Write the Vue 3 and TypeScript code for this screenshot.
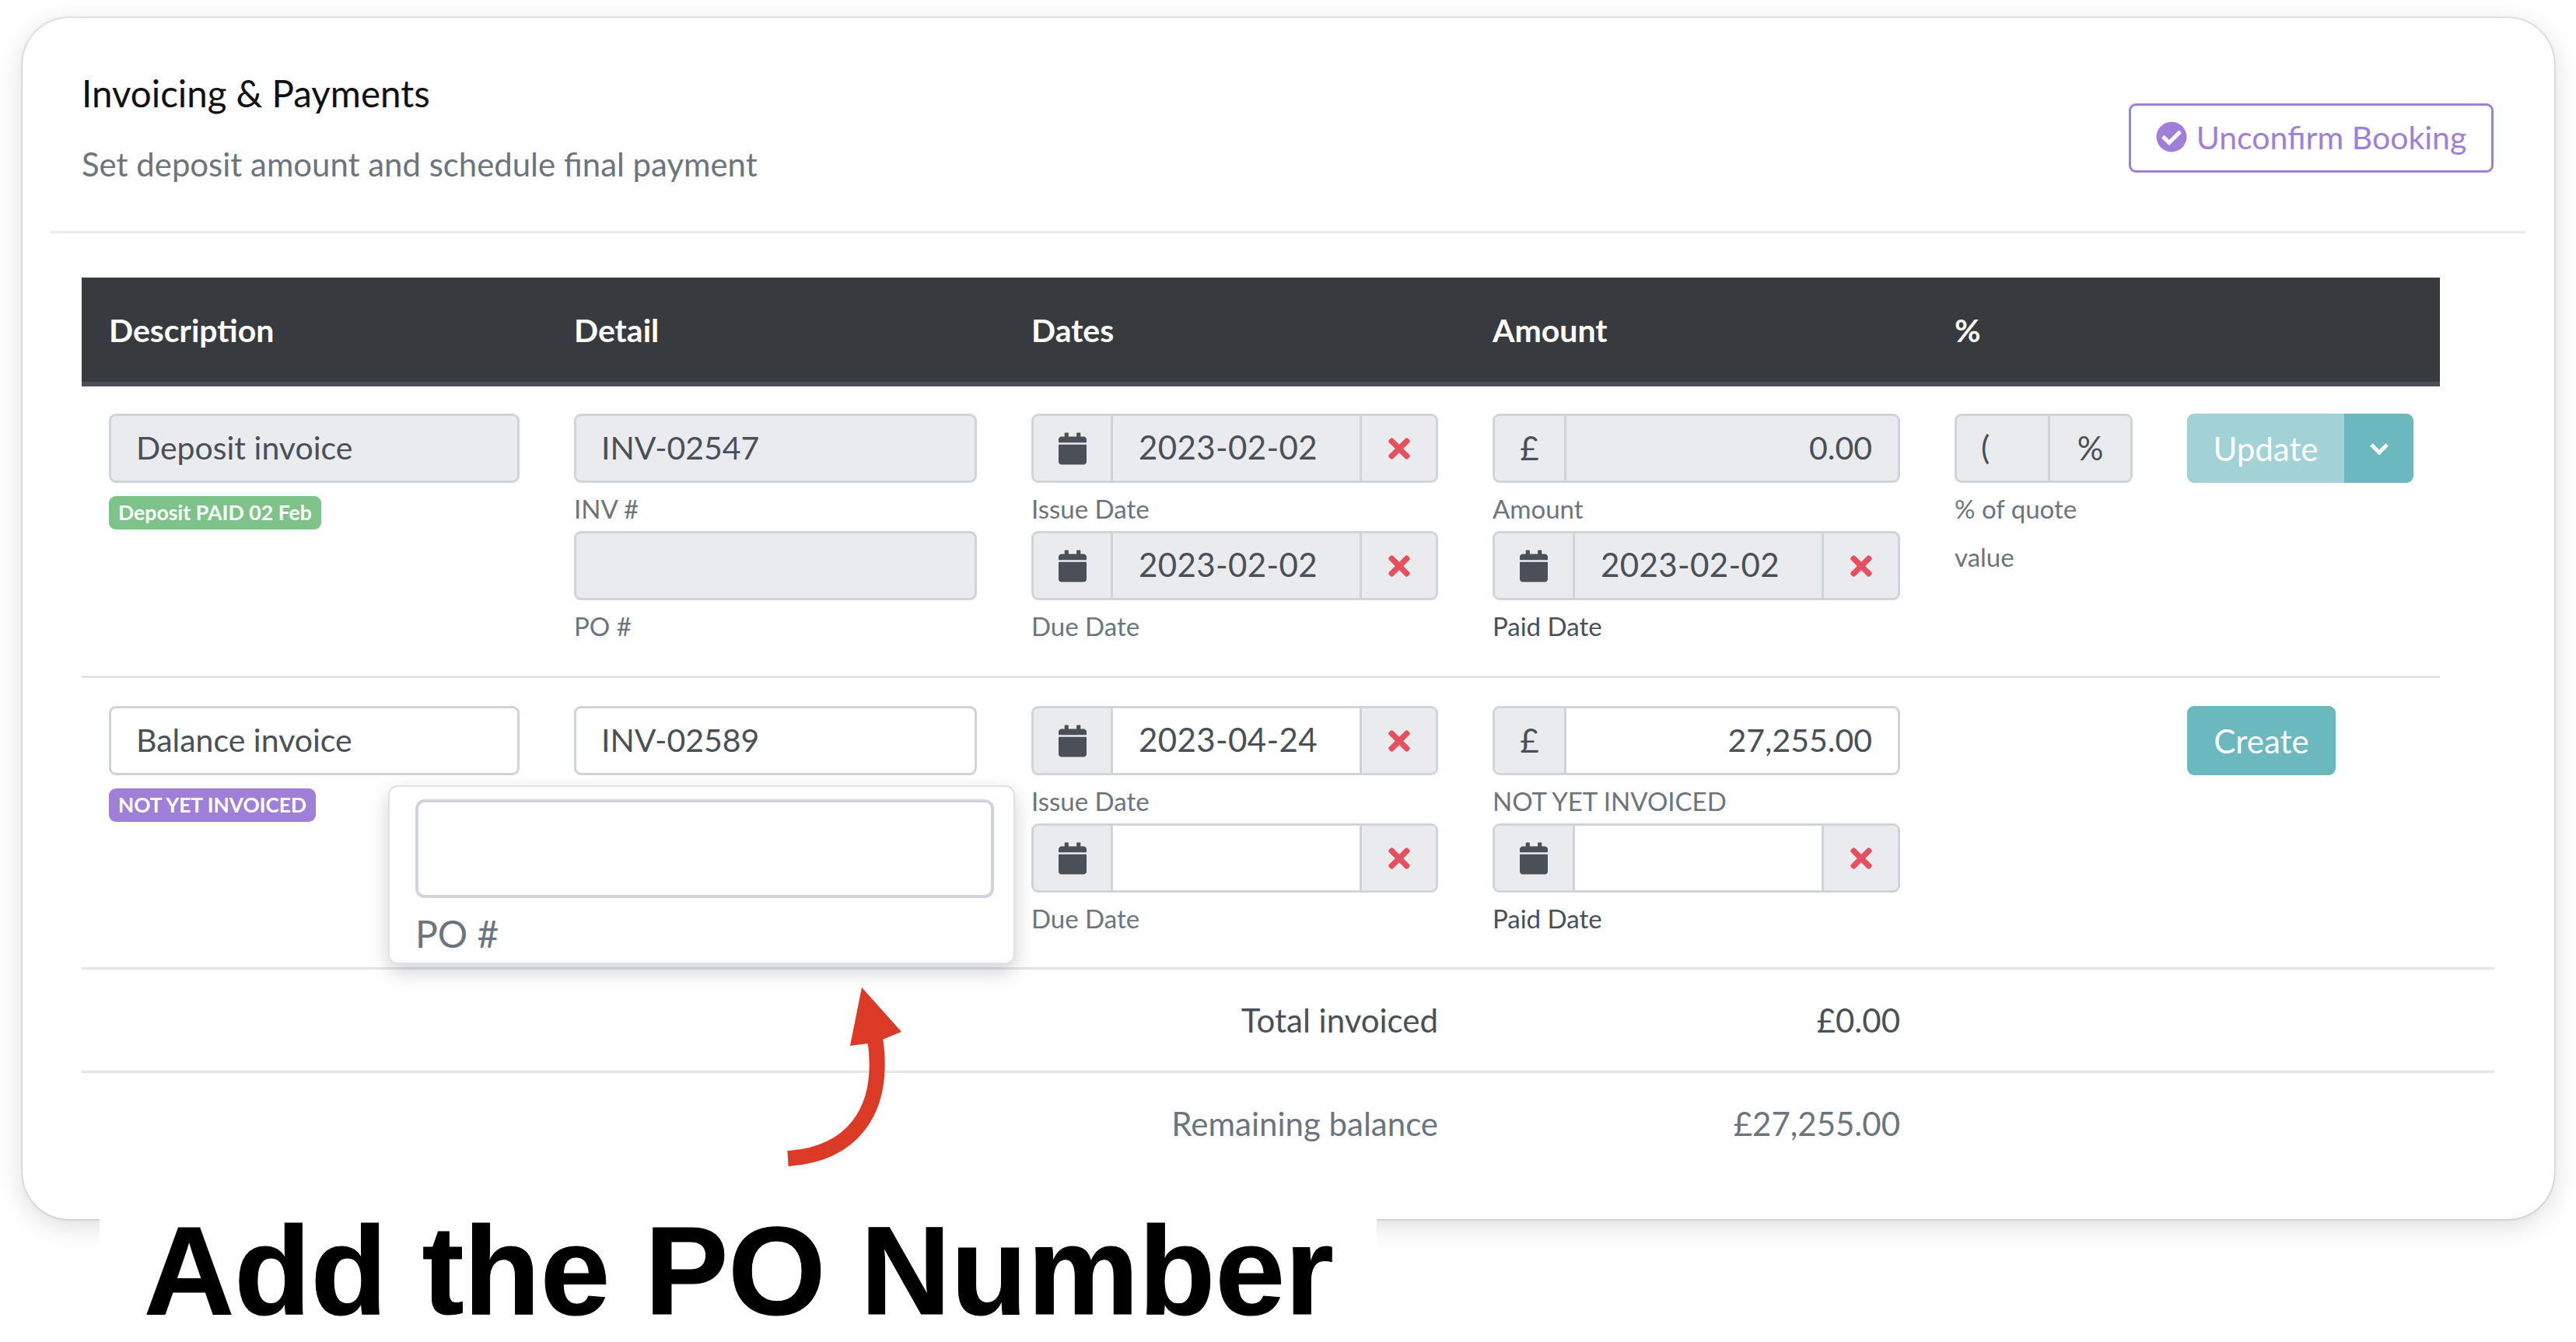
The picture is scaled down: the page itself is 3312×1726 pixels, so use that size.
<script setup lang="ts">
const calendar = 'M12 192h424c6.600 0 12 5.400 12 12v260c0 26.500-21.500 48-48 48H48c-26.500 0-48-21.500-48-48V204c0-6.600 5.400-12 12-12zm436-44v-36c0-26.500-21.500-48-48-48h-48V12c0-6.600-5.400-12-12-12h-40c-6.600 0-12 5.400-12 12v52H160V12c0-6.600-5.400-12-12-12h-40c-6.600 0-12 5.400-12 12v52H48C21.500 64 0 85.500 0 112v36c0 6.600 5.400 12 12 12h424c6.600 0 12-5.400 12-12z'
const times = 'M242.720 256l100.070-100.070c12.280-12.280 12.280-32.190 0-44.480l-22.240-22.240c-12.280-12.280-32.190-12.280-44.480 0L176 189.280 75.930 89.210c-12.280-12.280-32.190-12.280-44.480 0L9.210 111.450c-12.280 12.280-12.280 32.190 0 44.480L109.280 256 9.210 356.070c-12.280 12.280-12.280 32.190 0 44.480l22.240 22.240c12.280 12.280 32.200 12.280 44.480 0L176 322.720l100.070 100.070c12.280 12.280 32.200 12.280 44.480 0l22.240-22.240c12.280-12.280 12.280-32.190 0-44.480L242.720 256z'
const check = 'M504 256c0 136.967-111.033 248-248 248S8 392.967 8 256 119.033 8 256 8s248 111.033 248 248zM227.314 387.314l184-184c6.248-6.248 6.248-16.379 0-22.627l-22.627-22.627c-6.248-6.249-16.379-6.249-22.628 0L216 308.118l-70.059-70.059c-6.248-6.248-16.379-6.248-22.628 0l-22.627 22.627c-6.248 6.248-6.248 16.379 0 22.627l104 104c6.249 6.249 16.379 6.249 22.628.001z'
const columns = ['Description', 'Detail', 'Dates', 'Amount', '%', '']
</script>

<template>
  <div class="page">
    <section class="card">
      <header class="head">
        <div>
          <h2 class="title">Invoicing &amp; Payments</h2>
          <p class="sub">Set deposit amount and schedule final payment</p>
        </div>
        <button class="confirm">
          <svg class="check" viewBox="0 0 512 512"><path :d="check" fill="currentColor" /></svg>
          Unconfirm Booking
        </button>
      </header>

      <div class="table">
        <div class="grid thead">
          <div v-for="c in columns" :key="c" class="cell">{{ c }}</div>
        </div>

        <div class="grid row ruled">
          <div class="cell">
            <div class="box off pad">Deposit invoice</div>
            <span class="badge green">Deposit PAID 02 Feb</span>
          </div>
          <div class="cell">
            <div class="box off pad">INV-02547</div>
            <div class="label">INV #</div>
            <div class="box off pad"></div>
            <div class="label">PO #</div>
          </div>
          <div class="cell">
            <div class="box off date">
              <span class="add cal"><svg class="ic-cal" viewBox="0 0 448 512"><path :d="calendar" fill="currentColor" /></svg></span>
              <span class="val">2023-02-02</span>
              <span class="add x"><svg class="ic-x" viewBox="0 0 352 512"><path :d="times" fill="currentColor" /></svg></span>
            </div>
            <div class="label">Issue Date</div>
            <div class="box off date">
              <span class="add cal"><svg class="ic-cal" viewBox="0 0 448 512"><path :d="calendar" fill="currentColor" /></svg></span>
              <span class="val">2023-02-02</span>
              <span class="add x"><svg class="ic-x" viewBox="0 0 352 512"><path :d="times" fill="currentColor" /></svg></span>
            </div>
            <div class="label">Due Date</div>
          </div>
          <div class="cell">
            <div class="box off date">
              <span class="add pound">£</span>
              <span class="val right">0.00</span>
            </div>
            <div class="label">Amount</div>
            <div class="box off date">
              <span class="add cal wide"><svg class="ic-cal" viewBox="0 0 448 512"><path :d="calendar" fill="currentColor" /></svg></span>
              <span class="val">2023-02-02</span>
              <span class="add x"><svg class="ic-x" viewBox="0 0 352 512"><path :d="times" fill="currentColor" /></svg></span>
            </div>
            <div class="label dark">Paid Date</div>
          </div>
          <div class="cell">
            <div class="box off date">
              <span class="val pct">(</span>
              <span class="add sign">%</span>
            </div>
            <div class="label">% of quote value</div>
          </div>
          <div class="cell">
            <div class="split">
              <span class="btn faded">Update</span>
              <span class="btn caret">
                <svg viewBox="0 0 26 16" class="chev"><path d="M3 3l10 10L23 3" fill="none" stroke="currentColor" stroke-width="5" /></svg>
              </span>
            </div>
          </div>
        </div>

        <div class="grid row second">
          <div class="cell">
            <div class="box pad">Balance invoice</div>
            <span class="badge purple">NOT YET INVOICED</span>
          </div>
          <div class="cell">
            <div class="box pad">INV-02589</div>
          </div>
          <div class="cell">
            <div class="box date">
              <span class="add cal"><svg class="ic-cal" viewBox="0 0 448 512"><path :d="calendar" fill="currentColor" /></svg></span>
              <span class="val">2023-04-24</span>
              <span class="add x"><svg class="ic-x" viewBox="0 0 352 512"><path :d="times" fill="currentColor" /></svg></span>
            </div>
            <div class="label">Issue Date</div>
            <div class="box date">
              <span class="add cal"><svg class="ic-cal" viewBox="0 0 448 512"><path :d="calendar" fill="currentColor" /></svg></span>
              <span class="val"></span>
              <span class="add x"><svg class="ic-x" viewBox="0 0 352 512"><path :d="times" fill="currentColor" /></svg></span>
            </div>
            <div class="label">Due Date</div>
          </div>
          <div class="cell">
            <div class="box date">
              <span class="add pound">£</span>
              <span class="val right">27,255.00</span>
            </div>
            <div class="label">NOT YET INVOICED</div>
            <div class="box date">
              <span class="add cal wide"><svg class="ic-cal" viewBox="0 0 448 512"><path :d="calendar" fill="currentColor" /></svg></span>
              <span class="val"></span>
              <span class="add x"><svg class="ic-x" viewBox="0 0 352 512"><path :d="times" fill="currentColor" /></svg></span>
            </div>
            <div class="label dark">Paid Date</div>
          </div>
          <div class="cell"></div>
          <div class="cell">
            <span class="btn solo">Create</span>
          </div>
        </div>

        <div class="grid total">
          <div class="cell"></div>
          <div class="cell"></div>
          <div class="cell end">Total invoiced</div>
          <div class="cell end">£0.00</div>
        </div>
        <div class="grid total muted">
          <div class="cell"></div>
          <div class="cell"></div>
          <div class="cell end">Remaining balance</div>
          <div class="cell end">£27,255.00</div>
        </div>
      </div>

      <div class="popover">
        <div class="pop-input"></div>
        <div class="pop-label">PO #</div>
      </div>

      <svg class="arrow" width="170" height="240" viewBox="0 0 170 240">
        <path d="M8 225C85 220 135 170 120 70" fill="none" stroke="#db3b26" stroke-width="20" />
        <path d="M103 5L154 62L120 76L88 80Z" fill="#db3b26" />
      </svg>
    </section>

    <div class="caption">Add the PO Number</div>
  </div>
</template>

<style scoped>
.page {
  width: 3312px;
  height: 1726px;
  background: #fff;
  overflow: hidden;
  padding: 23px 0 0 29px;
  box-sizing: border-box;
  font-family: Lato, "Noto Sans", sans-serif;
  color: #495057;
}
.card {
  position: relative;
  width: 3255px;
  height: 1545px;
  background: #fff;
  border-radius: 60px;
  box-shadow: 0 0 3px rgba(0, 0, 0, 0.35), 0 8px 34px rgba(0, 0, 0, 0.14);
  box-sizing: border-box;
}
.head {
  margin: 0 37px 0 36px;
  height: 274px;
  padding: 0 41px 0 40px;
  border-bottom: 3px solid #e8e8f2;
  display: flex;
  justify-content: space-between;
  align-items: flex-start;
  box-sizing: content-box;
}
.title {
  margin: 66px 0 0;
  font-size: 47.500px;
  line-height: 62px;
  font-weight: 400;
  color: #111;
}
.sub {
  margin: 30px 0 0;
  font-size: 41.900px;
  line-height: 60px;
  color: #6c757d;
}
.confirm {
  margin-top: 110px;
  width: 469px;
  height: 89px;
  box-sizing: border-box;
  display: flex;
  align-items: center;
  justify-content: center;
  gap: 12px;
  padding: 0 0 3px;
  background: #fff;
  border: 3px solid #a07fd8;
  border-radius: 9px;
  color: #a07fd8;
  font: 400 41px Lato, sans-serif;
}
.check {
  width: 40px;
  height: 40px;
}
.table {
  margin: 57px 0 0 76px;
  width: 3102px;
}
.grid {
  display: grid;
  grid-template-columns: 598px 588px 593px 594px 299px 360px;
  width: 3032px;
  box-sizing: border-box;
}
.cell {
  padding: 0 35px;
  min-width: 0;
}
.thead {
  height: 140px;
  background: #373b40;
  border-bottom: 6px solid #4a4f57;
  align-items: center;
  color: #fff;
  font-size: 41px;
  font-weight: 700;
}
.row {
  height: 375px;
  padding-top: 35px;
}
.second {
  height: 372px;
  padding-top: 36px;
}
.ruled {
  border-bottom: 3px solid #e2e5ea;
}
.box {
  height: 89px;
  box-sizing: border-box;
  border: 3px solid #ced4da;
  border-radius: 9px;
  font-size: 41px;
  line-height: 81px;
  background: #fff;
  overflow: hidden;
}
.off {
  background: #e9ebef;
}
.pad {
  padding: 0 32px;
}
.date {
  display: flex;
}
.add {
  flex: none;
  display: flex;
  align-items: center;
  justify-content: center;
  background: #e9ebef;
  color: #495057;
  font-size: 42px;
}
.cal {
  width: 99px;
  border-right: 3px solid #ced4da;
}
.wide {
  width: 100px;
}
.x {
  width: 95px;
  border-left: 3px solid #ced4da;
  color: #e4505d;
}
.pound {
  width: 89px;
  border-right: 3px solid #ced4da;
}
.sign {
  width: 103px;
  border-left: 3px solid #ced4da;
}
.val {
  flex: 1;
  padding: 0 33px;
  min-width: 0;
  font-size: 42px;
  letter-spacing: 0.4px;
}
.right {
  text-align: right;
  font-size: 41px;
  letter-spacing: 0;
}
.pct {
  padding: 0 0 0 31px;
}
.ic-cal {
  width: 36px;
  height: 42px;
}
.ic-x {
  width: 28px;
  height: 40px;
}
.label {
  height: 60px;
  padding-top: 2px;
  line-height: 62px;
  font-size: 33px;
  color: #6c757d;
}
.dark {
  color: #495057;
}
.badge {
  display: inline-block;
  margin-top: 17px;
  height: 43px;
  line-height: 42px;
  padding: 0 12px;
  border-radius: 9px;
  font-weight: 700;
  color: #fff;
}
.green {
  background: #7ec48a;
  font-size: 26.700px;
}
.purple {
  background: #a07fd8;
  font-size: 26.300px;
}
.split {
  display: inline-flex;
  border-radius: 9px;
  overflow: hidden;
}
.btn {
  height: 89px;
  display: inline-flex;
  align-items: center;
  justify-content: center;
  color: #fff;
  font-size: 42px;
  box-sizing: border-box;
}
.faded {
  width: 202px;
  background: #a2d2d6;
}
.caret {
  width: 89px;
  background: #6bb8bf;
}
.chev {
  width: 26px;
  height: 16px;
}
.solo {
  width: 191px;
  background: #6bb8bf;
  border-radius: 9px;
}
.total {
  height: 133px;
  width: 3102px;
  border-top: 3px solid #e2e5ea;
  align-items: center;
  font-size: 42px;
}
.end {
  text-align: right;
}
.muted {
  color: #6c757d;
}
.popover {
  position: absolute;
  left: 470px;
  top: 987px;
  width: 806px;
  height: 230px;
  box-sizing: border-box;
  padding: 16px 25px 0 33px;
  background: #fff;
  border: 2px solid #dfe1e5;
  border-radius: 12px;
  box-shadow: 0 10px 26px rgba(0, 0, 0, 0.18);
}
.pop-input {
  height: 127px;
  box-sizing: border-box;
  border: 4px solid #ced4da;
  border-radius: 12px;
  background: #fff;
}
.pop-label {
  margin-top: 16px;
  font-size: 48px;
  line-height: 60px;
  color: #6c757d;
}
.arrow {
  position: absolute;
  left: 976px;
  top: 1242px;
}
.caption {
  position: relative;
  margin-left: 99px;
  width: 1642px;
  height: 158px;
  padding-left: 57px;
  box-sizing: border-box;
  background: #fff;
  color: #000;
  font: 700 161px/132px "Liberation Sans", Arial, sans-serif;
  -webkit-text-stroke: 1px #000;
  white-space: nowrap;
}
</style>
